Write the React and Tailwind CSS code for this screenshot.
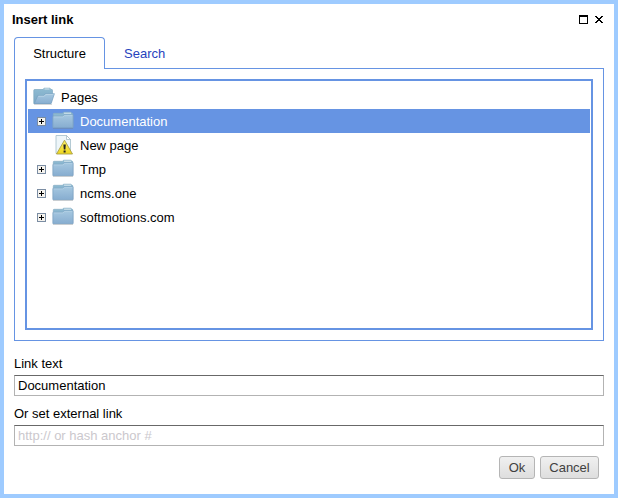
import React from "react";

function FolderDefs() {
  return (
    <svg width="0" height="0" className="absolute">
      <defs>
        <linearGradient id="front" x1="0" y1="0" x2="0" y2="1">
          <stop offset="0" stopColor="#a6c8e0" />
          <stop offset="1" stopColor="#87add0" />
        </linearGradient>
        <linearGradient id="back" x1="0" y1="0" x2="0" y2="1">
          <stop offset="0" stopColor="#8fbbd2" />
          <stop offset="1" stopColor="#79a8c6" />
        </linearGradient>
        <linearGradient id="warn" x1="0" y1="0" x2="0" y2="1">
          <stop offset="0" stopColor="#fff36a" />
          <stop offset="1" stopColor="#ecd41c" />
        </linearGradient>
      </defs>
    </svg>
  );
}

function OpenFolder() {
  return (
    <svg width="22" height="22" viewBox="0 0 22 22" className="shrink-0">
      <path d="M1 18.500h18" stroke="#888" strokeOpacity=".3" />
      <path d="M.8 17.500V4.300q0-.8.8-.8h8.400l1-1.300h6l1 1.300h.7q.8 0 .8.800V9l-2 8.500z" fill="url(#back)" stroke="#7da8c0" strokeWidth=".7" />
      <path d="M11.500 3h5" stroke="#d7e8ef" />
      <path d="M1.300 17.600L4.800 9.500h6.200l1.500-1.800h8.900l-3.200 9.900z" fill="url(#front)" stroke="#769fc0" strokeWidth=".7" />
      <path d="M5.300 10.200h6l1.500-1.800h7.700" fill="none" stroke="#c4ddeb" strokeWidth=".7" />
    </svg>
  );
}

function Folder() {
  return (
    <svg width="22" height="22" viewBox="0 0 22 22" className="shrink-0">
      <path d="M1 18.500h20" stroke="#777" strokeOpacity=".3" />
      <path d="M1.300 17V4q0-.7.7-.7h8.500l1-1.100h7.500l1 1.100q.8 0 .8.700v13z" fill="url(#back)" stroke="#86adc4" strokeWidth=".7" />
      <path d="M12 3.200h7" stroke="#d9e9ef" />
      <path d="M.9 17.700V6.700q0-.5.5-.5h9.100l1.700-1.500h8.400q.5 0 .5.500v12.500z" fill="url(#front)" stroke="#7ba0c2" strokeWidth=".7" />
      <path d="M1.600 6.900h9.300l1.700-1.500h7.800" fill="none" stroke="#bcd8ea" strokeWidth=".6" />
    </svg>
  );
}

function WarningPage() {
  return (
    <svg width="22" height="22" viewBox="0 0 22 22" className="shrink-0">
      <path d="M4 1.500h10.500l4 4v14H4z" fill="#eef6f9" stroke="#a3bec9" strokeWidth=".8" />
      <path d="M14.500 1.500v4h4z" fill="#fff" stroke="#9db7c1" strokeWidth=".7" />
      <path d="M12.500 6.200L20.500 20H4.500z" fill="url(#warn)" stroke="#aaa04a" strokeWidth=".9" strokeLinejoin="round" />
      <path d="M11.400 10.500h2.400l-.4 5h-1.600z" fill="#222" />
      <rect x="11.600" y="16.500" width="2" height="2" fill="#222" />
    </svg>
  );
}

function Expander() {
  return (
    <svg width="9" height="9" viewBox="0 0 9 9" className="shrink-0" shapeRendering="crispEdges">
      <rect width="9" height="9" fill="#7b8da3" />
      <rect x="1" y="1" width="7" height="7" fill="#f5f3ee" />
      <path d="M2 4h5v1H2zM4 2h1v5H4z" fill="#000" />
    </svg>
  );
}

function Row({ label, selected, page }) {
  return (
    <div className={"flex h-6 items-center pl-[9px] " + (selected ? "bg-[#6694e3] text-white" : "")}>
      <div className="mr-1.5 flex w-[9px] pt-px">{!page && <Expander />}</div>
      {page ? <WarningPage /> : <Folder />}
      <span className="ml-[6px]">{label}</span>
    </div>
  );
}

const inputClass =
  "block h-[21px] w-full border border-[#b3b3b3] border-t-[#686868] bg-white px-[3px] text-[13px] leading-[19px] text-black outline-none placeholder:text-[#cbc8cd] placeholder:opacity-100";
const buttonClass =
  "h-[23px] rounded-[3px] border border-[#b5b5b5] bg-linear-to-b from-[#f0f0f0] to-[#dedede] text-center leading-[21px] text-[#404040]";

export default function App() {
  return (
    <div className="flex h-[498px] w-[618px] flex-col border-4 border-[#9ecbff] bg-white px-[10px] font-['Liberation_Sans',Arial,sans-serif] text-[13px] leading-[15px] text-black">
      <FolderDefs />
      <header className="flex h-[33px] items-center justify-between pb-[2px]">
        <h1 className="-ml-[2px] text-[13px] font-bold">Insert link</h1>
        <svg width="25" height="9" viewBox="0 0 25 9" shapeRendering="crispEdges">
          <path d="M0 0h9v9H0zM1 2v6h7V2z" fill="#000" fillRule="evenodd" />
          <path d="M16 1h2v1h-2zM22 1h2v1h-2zM17 2h2v1h-2zM21 2h2v1h-2zM18 3h4v1h-4zM19 4h2v1h-2zM18 5h4v1h-4zM17 6h2v1h-2zM21 6h2v1h-2zM16 7h2v1h-2zM22 7h2v1h-2z" fill="#000" />
        </svg>
      </header>
      <nav className="z-10 -mb-px flex h-8 shrink-0">
        <button className="w-[91px] rounded-t-[4px] border border-b-0 border-[#6694e3] bg-white">Structure</button>
        <button className="ml-[19px] text-[#2743bd]">Search</button>
      </nav>
      <section className="h-[273px] shrink-0 border border-[#6694e3] p-[10px]">
        <div className="h-[251px] w-[568px] border-2 border-[#6694e3] px-px pt-1">
          <div className="flex h-6 items-center pl-[5px]">
            <OpenFolder />
            <span className="ml-[6px]">Pages</span>
          </div>
          <Row label="Documentation" selected />
          <Row label="New page" page />
          <Row label="Tmp" />
          <Row label="ncms.one" />
          <Row label="softmotions.com" />
        </div>
      </section>
      <label className="mt-[15px] block">
        <span className="mb-1 block">Link text</span>
        <input className={inputClass} defaultValue="Documentation" />
      </label>
      <label className="mt-[10px] block">
        <span className="mb-1 block">Or set external link</span>
        <input className={inputClass} placeholder="http:// or hash anchor #" />
      </label>
      <footer className="mt-[10px] flex justify-end gap-[5px] pr-[5px]">
        <button className={buttonClass + " w-9"}>Ok</button>
        <button className={buttonClass + " w-[59px]"}>Cancel</button>
      </footer>
    </div>
  );
}
